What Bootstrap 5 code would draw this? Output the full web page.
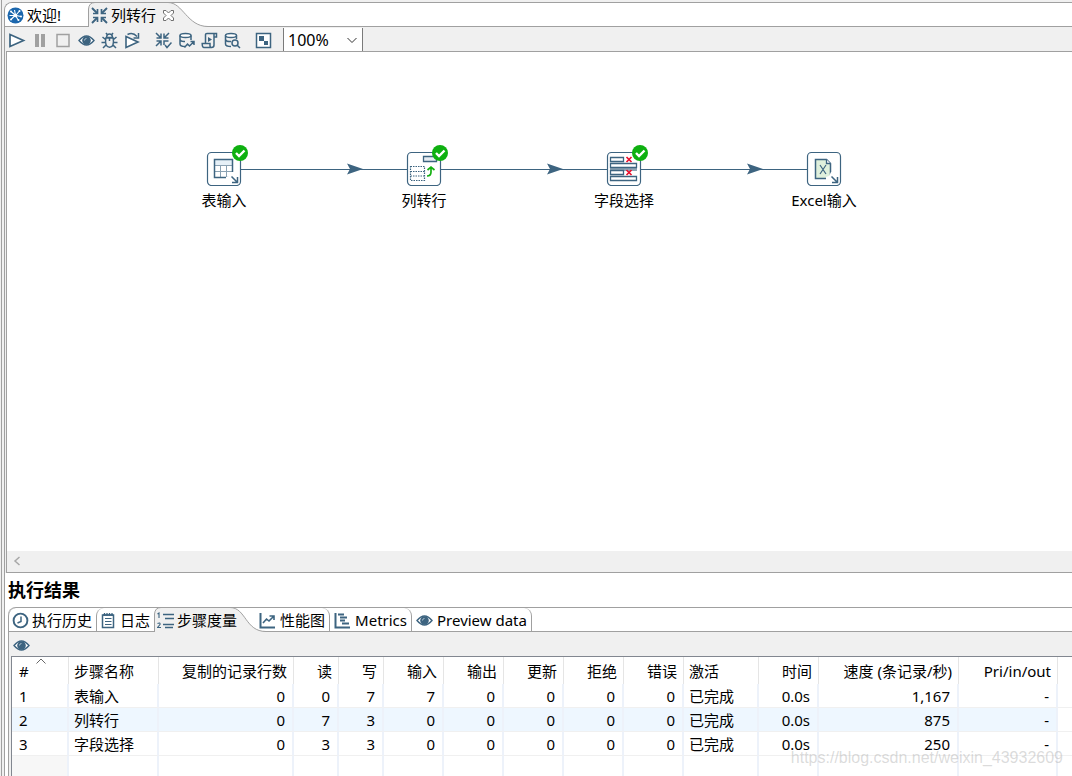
<!DOCTYPE html>
<html lang="zh-CN">
<head>
<meta charset="utf-8">
<meta name="viewport" content="width=device-width, initial-scale=1">
<title>列转行</title>
<link href="https://cdn.jsdelivr.net/npm/bootstrap@5.3.0/dist/css/bootstrap.min.css" rel="stylesheet">
<style>
  :root { --line: #a0a0a0; --chrome: #f0f0f0; --ink: #3d6480; }
  body { font-family: "Noto Sans", "Noto Sans CJK SC", sans-serif; font-size: 15px; line-height: 20px; color: #000; background: var(--chrome); }
  button { font: inherit; color: inherit; background: none; border: 0; padding: 0; }
  svg { display: block; flex: none; }
  .ico { width: 17px; height: 17px; color: var(--ink); }
  .shell { padding-top: 2px; }
  .rail { width: 3px; border-left: 1px solid var(--line); margin: -2px 0 0 1px; flex: none; }
  .editor { border: solid var(--line); border-width: 1px 0 0 1px; border-top-left-radius: 8px; min-width: 0; }

  .tabstrip { height: 24px; background: #fff; box-shadow: inset 0 -1px var(--line); flex: none; }
  .tab { height: 24px; gap: 3px; padding: 0 4px 0 3px; white-space: nowrap; }
  .tab-first { padding-left: 2px; margin-right: 23px; }
  .tab-before { border-left: 1px solid var(--line); border-top-left-radius: 8px; }
  .tab-after { border-right: 1px solid var(--line); border-top-right-radius: 8px; gap: 4px; padding: 0 4px; }
  .tab-active { position: relative; z-index: 1; }
  .tab-slope { margin-right: 14px; }
  .tab-active .shape { position: absolute; left: 0; top: 0; z-index: -1; height: 24px; }
  .strip-lined { height: 25px; border-top: 1px solid var(--line); border-top-left-radius: 8px; }

  .toolrow { padding-left: 1px; }
  .tool { width: 23px; height: 24px; }
  .tool .ico { margin-top: 2px; }
  .tool:disabled { opacity: 1; }
  .tool:disabled .ico { color: #a0a0a0; }
  .zoom-box { width: 80px; height: 23px; margin-top: 1px; font-size: 16px; line-height: 20px; color: #000; padding: 0 20px 0 4px; border: solid #7a7a7a; border-width: 0 1px; border-radius: 0;
    background: #fff url("data:image/svg+xml,%3Csvg xmlns='http://www.w3.org/2000/svg' viewBox='0 0 12 12'%3E%3Cpath d='M1.5 4 6 8.5 10.5 4' fill='none' stroke='%23333'/%3E%3C/svg%3E") no-repeat right 4px center / 12px 12px; }

  .canvas { border: solid var(--line); border-width: 1px 0 1px 1px; min-height: 300px; margin-left: 1px; }
  .hop { position: absolute; width: 166px; height: 12px; top: 111px; }
  .step { position: absolute; top: 92px; width: 120px; }
  .step svg { width: 42px; height: 42px; margin-left: 42px; }
  .step span { display: block; margin-top: 4px; }
  .scroll-h { height: 21px; background: var(--chrome); }

  .results { min-height: 203px; }
  .results-title { font-size: 18px; line-height: 34px; height: 34px; font-weight: 700; padding-left: 3px; }
  .folder { margin-left: 3px; }
  .folder-body { border-left: 1px solid var(--line); background: var(--chrome); }
  .grid-frame { margin-left: 2px; border: solid #828790; border-width: 1px 0 0 1px; background: #fff; }

  .metrics { table-layout: fixed; width: 100%; border-collapse: separate; border-spacing: 0; white-space: nowrap; }
  .metrics th { font-weight: 400; height: 27px; padding: 0 6px 0 5px; border-right: 1px solid #e5e5e5; position: relative; }
  .metrics td { height: 24px; padding: 0 7px 0 5px; border-right: 2px solid #edf2fa; border-bottom: 1px solid #f0f0f0; }
  .metrics th:last-child, .metrics td:last-child { border-right: 0; }
  .metrics td:first-child, .metrics th:first-child { padding-left: 7px; }
  .metrics .filler td { height: 20px; border-bottom: 0; }
  .metrics .filler td:first-child { background: #f7f7f7; }
  .metrics .alt td { background: #eef7ff; }
  .metrics .alt td:last-child { background: #fff; }
  .sort { position: absolute; left: 24px; top: 1px; }
  .w45 { width: 45px; } .w60 { width: 60px; }
  .watermark { position: absolute; right: 9px; bottom: 8px; font: 16px/20px "Liberation Sans", sans-serif; color: rgba(160,160,160,.38); }
</style>
</head>
<body class="vh-100 overflow-hidden">
<svg width="0" height="0" class="position-absolute" aria-hidden="true">
  <symbol id="eye" viewBox="0 0 17 17"><path d="M1 8.500Q8.500-.5 16 8.500Q8.500 17.500 1 8.500Z" fill="#fff" stroke="currentColor" stroke-width="1.400"/><circle cx="8.500" cy="8.500" r="4.300" fill="currentColor"/><path d="M6.500 8.500a2 2 0 0 1 2-2" fill="none" stroke="#a9bdcc"/></symbol>
  <symbol id="trans" viewBox="0 0 17 17"><g fill="none" stroke="currentColor" stroke-width="1.900"><path d="M1 1l5 5M16 1l-5 5M1 16l5-5M16 16l-5-5"/><path d="M2 6.500h4.500V2M15 6.500h-4.500V2M2 10.500h4.500V15M15 10.500h-4.500V15" stroke-width="1.700"/></g></symbol>
  <symbol id="hop" viewBox="0 0 166 12"><path d="M0 6.500h166" stroke="#3d6480"/><path d="M106 .5L122 6 106 11.500 109 6Z" fill="#3d6480"/></symbol>
  <symbol id="box" viewBox="0 0 42 42"><rect x="1.500" y="8.500" width="33" height="33" rx="4" fill="#fff" stroke="#3d6480" stroke-width="1.200"/></symbol>
  <symbol id="ok" viewBox="0 0 42 42"><circle cx="34" cy="9" r="8" fill="#0eb010"/><path d="M30 9l3 3 5.500-5.500" fill="none" stroke="#fff" stroke-width="2.400"/></symbol>
  <symbol id="corner" viewBox="0 0 42 42"><path d="M20 36V33l3-1 2-4h4v8z" fill="#fff"/><path d="M25.500 32.500l5.500 5.500M31.500 33v5.500H26" fill="none" stroke="#3d6480" stroke-width="1.500"/></symbol>
</svg>
<div class="shell d-flex h-100">
  <div class="rail"></div>
  <main class="editor d-flex flex-column flex-grow-1 position-relative overflow-hidden">
    <div class="tabstrip d-flex" role="tablist">
      <button class="tab tab-first d-flex align-items-center" id="tab-welcome" role="tab">
        <svg class="ico" viewBox="0 0 17 17"><circle cx="8.500" cy="8.500" r="8" fill="#1c67ad"/><g stroke="#fff" stroke-width="1.100" fill="#fff"><path d="M4 4.500l4 3.500M12.500 4l-3.500 4M4 12.500l4-4M7.500 3l1 5M14 9.500l-5-1M11.500 13.500l-3-5M2.500 8.500h6"/><circle cx="8.500" cy="8.500" r="1.300"/><g stroke="none"><circle cx="4" cy="4.500" r="1"/><circle cx="12.500" cy="4" r="1"/><circle cx="4" cy="12.500" r="1"/><circle cx="11.500" cy="13" r="1"/><circle cx="14" cy="9.500" r="1"/></g></g></svg>
        <span>欢迎!</span>
      </button>
      <button class="tab tab-active d-flex align-items-center" id="tab-trans" role="tab" aria-selected="true">
        <svg class="shape" width="120" viewBox="0 0 120 24"><path d="M.5 24V6Q1-.5 7-.5H80C95-.5 99 23.500 120 23.500V24Z" fill="#f0f0f0"/><path d="M.5 24V6Q1-.5 7-.5M80-.5C95-.5 99 23.500 120 23.500" fill="none" stroke="#a0a0a0"/></svg>
        <svg class="ico"><use href="#trans"/></svg>
        <span>列转行</span>
        <svg class="ms-1" width="11" height="11" viewBox="0 0 11 11"><path d="M.5.500h2.500L5.500 3 8 .500h2.500V3L8 5.500 10.500 8v2.500H8L5.500 8 3 10.500H.5V8L3 5.500.5 3Z" fill="#fff" stroke="#707070"/></svg>
      </button>
    </div>
    <div class="toolrow d-flex flex-shrink-0" role="toolbar" aria-label="转换">
      <button class="tool" aria-label="运行"><svg class="ico mx-auto" viewBox="0 0 17 17"><path d="M1 2.500L14.500 8.500 1 14.500Z" fill="#fff" stroke="currentColor" stroke-width="1.700"/></svg></button>
      <button class="tool" aria-label="暂停" disabled><svg class="ico mx-auto" viewBox="0 0 17 17"><path d="M3 2h4v13H3zM9 2h4v13h-4z" fill="currentColor"/></svg></button>
      <button class="tool" aria-label="停止" disabled><svg class="ico mx-auto" viewBox="0 0 17 17"><path d="M2 2.500h12v12H2z" fill="none" stroke="currentColor" stroke-width="1.500"/></svg></button>
      <button class="tool" aria-label="预览"><svg class="ico mx-auto"><use href="#eye"/></svg></button>
      <button class="tool" aria-label="调试"><svg class="ico mx-auto" viewBox="0 0 17 17"><g fill="none" stroke="currentColor" stroke-width="1.500"><path d="M5 5.500h7M5.500 5Q6 2 8.500 2T11.500 5M4.800 6Q3.500 15 8.500 15.200T12.200 6ZM5 1l1.500 2M12 1l-1.500 2M1.500 5l3 2.500M15.500 5l-3 2.500M.5 10.500h4M16.500 10.500h-4M2 16l3-3M15 16l-3-3M8.500 6v3"/></g></svg></button>
      <button class="tool" aria-label="重放"><svg class="ico mx-auto" viewBox="0 0 17 17"><path d="M2 4.500L14 10 2 15.500Z" fill="#fff" stroke="currentColor" stroke-width="1.600"/><path d="M3.500 2.500Q9 0 13 4.500M14.500 1v5H9.500" fill="none" stroke="currentColor" stroke-width="1.500"/></svg></button>
      <button class="tool ms-2" aria-label="校验"><svg class="ico mx-auto" viewBox="0 0 17 17"><g fill="none" stroke="currentColor" stroke-width="1.500"><path d="M1 1l4.500 4.500M14 1L9.500 5.500M1 14l4.500-4.500M1.500 6H6V1.500M13.500 6H9V1.500M1.500 9H6v4.500M9 13V9h4.500"/><path d="M10 13l2 2.500 4.500-5"/></g></svg></button>
      <button class="tool" aria-label="影响分析"><svg class="ico mx-auto" viewBox="0 0 17 17"><g fill="none" stroke="currentColor" stroke-width="1.500"><path d="M7 14.500Q2 14.500 2 12V3.500M13 3.500V8M2 7.500Q3 10 7 9.500"/><ellipse cx="7.500" cy="3.500" rx="5.500" ry="2" fill="#fff"/><path d="M6.500 15.500l3-3.500 2 2L16 9.500M12.500 9.500H16V13"/></g></svg></button>
      <button class="tool" aria-label="SQL"><svg class="ico mx-auto" viewBox="0 0 17 17"><path d="M4.500 11V2.500Q4.500 1.500 6 1.500h9.500V5H13v8q0 2.500-2.500 2.500H3Q1.200 15.500 1.200 11.500H9v2q0 2 1.500 2M13 5V2" fill="none" stroke="currentColor" stroke-width="1.500"/><path d="M7 5l4 2.500L7 10Z" fill="currentColor"/></svg></button>
      <button class="tool" aria-label="探索数据库"><svg class="ico mx-auto" viewBox="0 0 17 17"><g fill="none" stroke="currentColor" stroke-width="1.500"><path d="M7 14.500Q1.500 14.500 1.500 12V3.500M12.500 3.500V7M1.500 7.500Q2.500 10 7 9.500"/><ellipse cx="7" cy="3.500" rx="5.500" ry="2" fill="#fff"/><circle cx="11" cy="11" r="3"/><path d="M13 13l3 3"/></g></svg></button>
      <button class="tool ms-2" aria-label="显示执行结果"><svg class="ico mx-auto" viewBox="0 0 17 17"><path d="M1.500 1.500h14v14h-14z" fill="#fff" stroke="currentColor" stroke-width="1.500"/><path d="M4 4h5v5H4zM9 9h4v4H9z" fill="currentColor"/></svg></button>
      <select class="form-select zoom-box ms-2" id="zoom" aria-label="缩放"><option>100%</option></select>
    </div>

    <section class="canvas d-flex flex-column flex-grow-1 bg-white">
      <div class="flex-grow-1 position-relative" id="graph">
        <svg class="hop" style="left:234px"><use href="#hop"/></svg>
        <svg class="hop" style="left:434px"><use href="#hop"/></svg>
        <svg class="hop" style="left:634px"><use href="#hop"/></svg>
        <div class="step text-center" style="left:157px"><svg viewBox="0 0 42 42"><use href="#box"/>
          <path d="M9 16h17v5H9z" fill="#e6f0f7"/><path d="M9 21.500h17.500M9 27.500h17M14.500 21v12M20.500 21v12" stroke="#8aa1b2"/><path d="M8.500 15.500h18v18h-18z" fill="none" stroke="#3d6480" stroke-width="1.500"/><use href="#corner"/><use href="#ok"/></svg><span>表输入</span></div>
        <div class="step text-center" style="left:357px"><svg viewBox="0 0 42 42"><use href="#box"/>
          <path d="M17.500 12.500h13v5h-13z" fill="#e6ecf2" stroke="#3d6480" stroke-width="1.300"/><path d="M4.500 22.500h14v14h-14zM4.500 27.500h14M4.500 32h14" fill="none" stroke="#3d6480" stroke-width="1.200" stroke-dasharray="1.500 1"/><path d="M21 32q4 0 4-4v-4M21.500 26l3.500-3 3.500 3" fill="none" stroke="#14b011" stroke-width="1.700"/><use href="#ok"/></svg><span>列转行</span></div>
        <div class="step text-center" style="left:557px"><svg viewBox="0 0 42 42"><use href="#box"/>
          <path d="M4 24h27v3H4z" fill="#8fa5b5"/><g fill="#fff" stroke="#3d6480" stroke-width="1.300"><path d="M4.500 13.500h13v4h-13zM4.500 19.500h26v4h-26zM4.500 26.500h13v4h-13zM4.500 32.500h26v4h-26z"/></g><path d="M20.500 13l5 5M25.500 13l-5 5M20.500 26l5 5M25.500 26l-5 5" stroke="#e8112d" stroke-width="1.700"/><use href="#ok"/></svg><span>字段选择</span></div>
        <div class="step text-center" style="left:757px"><svg viewBox="0 0 42 42"><use href="#box"/>
          <path d="M9.500 15.500h11l4 4v15h-15z" fill="#dff0dc" stroke="#3d6480" stroke-width="1.500"/><path d="M20.500 15.500v4h4" fill="#fff" stroke="#3d6480" stroke-width="1.300"/><path d="M14 21l6 9M20 21l-6 9" stroke="#3d6480" stroke-width="1.200"/><use href="#corner"/></svg><span>Excel输入</span></div>
      </div>
      <div class="scroll-h d-flex align-items-center"><svg class="ms-1" width="12" height="12" viewBox="0 0 12 12"><path d="M8.500 1L4 5l4.500 4" fill="none" stroke="#a8a8a8" stroke-width="1.500"/></svg></div>
    </section>

    <section class="results d-flex flex-column bg-white flex-shrink-0">
      <h2 class="results-title mb-0">执行结果</h2>
      <div class="folder d-flex flex-column flex-grow-1">
        <div class="tabstrip strip-lined d-flex" role="tablist">
          <button class="tab tab-before d-flex align-items-center" id="t-history" role="tab"><svg class="ico" viewBox="0 0 17 17"><circle cx="8.500" cy="8.500" r="6.900" fill="#fff" stroke="currentColor" stroke-width="1.900"/><path d="M9 4.500V9.500L5.500 11" fill="none" stroke="currentColor" stroke-width="1.500"/></svg><span>执行历史</span></button>
          <button class="tab tab-before d-flex align-items-center" id="t-log" role="tab"><svg class="ico" viewBox="0 0 17 17"><path d="M2.500 3h11v12.500h-11z" fill="#fff" stroke="currentColor" stroke-width="1.500"/><path d="M3 3h10M4.500 1v3M7 1v3M9.500 1v3M12 1v3" stroke="currentColor" stroke-width="1.300"/><path d="M5 6.500h6.500M5 9.500h6.500M5 12.500h6.500" stroke="currentColor" stroke-width="1.200"/></svg><span>日志</span></button>
          <button class="tab tab-active tab-slope d-flex align-items-center" id="t-metrics" role="tab" aria-selected="true"><svg class="shape" width="112" viewBox="0 0 112 24"><path d="M.5 24V6Q1-.5 7-.5H76C92-.5 91 23.500 112 23.500V24Z" fill="#f0f0f0"/><path d="M.5 24V6Q1-.5 7-.5M76-.5C92-.5 91 23.500 112 23.500" fill="none" stroke="#a0a0a0"/></svg>
            <svg class="ico" viewBox="0 0 17 17"><path d="M6 2.500h11M8 6.500h9M6 12.500h11M8 15.500h8" stroke="currentColor" stroke-width="1.400"/><path d="M.5 2L2 1v5M.5 11.500Q3.500 10 3 12.500L.5 15.500h3.500" fill="none" stroke="currentColor" stroke-width="1.100"/></svg><span>步骤度量</span></button>
          <button class="tab tab-after position-relative z-1 d-flex align-items-center" id="t-perf" role="tab"><svg class="ico" viewBox="0 0 17 17"><path d="M1.500 1v14.500H16" fill="none" stroke="currentColor" stroke-width="2"/><path d="M4 11l3.500-4 2.500 2 4.500-4.500M10.500 4h4.500v4" fill="none" stroke="currentColor" stroke-width="1.600"/></svg><span>性能图</span></button>
          <button class="tab tab-after d-flex align-items-center" id="t-gantt" role="tab"><svg class="ico" viewBox="0 0 17 17"><path d="M1.500 1v14.500H16" fill="none" stroke="currentColor" stroke-width="2"/><path d="M4 2.500h6M6 5.500h7M6 8.500h5M8 11.500h7" stroke="currentColor" stroke-width="2.200"/></svg><span>Metrics</span></button>
          <button class="tab tab-after d-flex align-items-center" id="t-preview" role="tab"><svg class="ico"><use href="#eye"/></svg><span>Preview data</span></button>
        </div>
        <div class="folder-body d-flex flex-column flex-grow-1">
          <div><button class="tool d-block ms-1" aria-label="显示选中步骤"><svg class="ico"><use href="#eye"/></svg></button></div>
          <div class="grid-frame flex-grow-1">
            <table class="metrics">
              <colgroup><col style="width:57px"><col style="width:90px"><col style="width:135px"><col class="w45"><col class="w45"><col class="w60"><col class="w60"><col class="w60"><col class="w60"><col class="w60"><col style="width:75px"><col class="w60"><col style="width:140px"><col style="width:99px"><col></colgroup>
              <thead><tr><th>#<svg class="sort" width="10" height="6" viewBox="0 0 10 6"><path d="M.5 5.500L5 1l4.500 4.500" fill="none" stroke="#666"/></svg></th><th>步骤名称</th><th class="text-end">复制的记录行数</th><th class="text-end">读</th><th class="text-end">写</th><th class="text-end">输入</th><th class="text-end">输出</th><th class="text-end">更新</th><th class="text-end">拒绝</th><th class="text-end">错误</th><th>激活</th><th class="text-end">时间</th><th class="text-end">速度 (条记录/秒)</th><th class="text-end">Pri/in/out</th><th></th></tr></thead>
              <tbody>
                <tr><td>1</td><td>表输入</td><td class="text-end">0</td><td class="text-end">0</td><td class="text-end">7</td><td class="text-end">7</td><td class="text-end">0</td><td class="text-end">0</td><td class="text-end">0</td><td class="text-end">0</td><td>已完成</td><td class="text-end">0.0s</td><td class="text-end">1,167</td><td class="text-end">-</td><td></td></tr>
                <tr class="alt"><td>2</td><td>列转行</td><td class="text-end">0</td><td class="text-end">7</td><td class="text-end">3</td><td class="text-end">0</td><td class="text-end">0</td><td class="text-end">0</td><td class="text-end">0</td><td class="text-end">0</td><td>已完成</td><td class="text-end">0.0s</td><td class="text-end">875</td><td class="text-end">-</td><td></td></tr>
                <tr><td>3</td><td>字段选择</td><td class="text-end">0</td><td class="text-end">3</td><td class="text-end">3</td><td class="text-end">0</td><td class="text-end">0</td><td class="text-end">0</td><td class="text-end">0</td><td class="text-end">0</td><td>已完成</td><td class="text-end">0.0s</td><td class="text-end">250</td><td class="text-end">-</td><td></td></tr>
                <tr class="filler"><td></td><td></td><td></td><td></td><td></td><td></td><td></td><td></td><td></td><td></td><td></td><td></td><td></td><td></td><td></td></tr>
              </tbody>
            </table>
          </div>
        </div>
      </div>
    </section>
    <div class="watermark">https://blog.csdn.net/weixin_43932609</div>
  </main>
</div>
<script src="https://cdn.jsdelivr.net/npm/bootstrap@5.3.0/dist/js/bootstrap.bundle.min.js"></script>
</body>
</html>
